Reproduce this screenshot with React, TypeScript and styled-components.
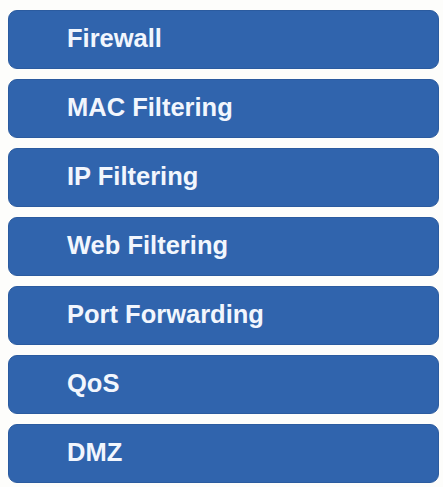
import React from "react";
import styled, { createGlobalStyle } from "styled-components";

const items = [
  "Firewall",
  "MAC Filtering",
  "IP Filtering",
  "Web Filtering",
  "Port Forwarding",
  "QoS",
  "DMZ",
];

function App() {
  return (
    <>
      <GlobalStyle />
      <Menu>
        {items.map((label) => (
          <MenuButton key={label}>{label}</MenuButton>
        ))}
      </Menu>
    </>
  );
}

export default App;

const GlobalStyle = createGlobalStyle`
  html, body {
    margin: 0;
    padding: 0;
    background: #fdfdfb;
  }
`;

const Menu = styled.nav`
  display: flex;
  flex-direction: column;
  gap: 10px;
  padding: 10px 4px 0 8px;
`;

const MenuButton = styled.div`
  box-sizing: border-box;
  height: 59px;
  padding: 12px 0 0 58px;
  background: #3064ad;
  border: 1px solid #2b5b9f;
  border-radius: 9px;
  color: #f2f6fd;
  font-family: "Liberation Sans", Arial, sans-serif;
  font-weight: bold;
  font-size: 25.5px;
  line-height: 30px;
`;
